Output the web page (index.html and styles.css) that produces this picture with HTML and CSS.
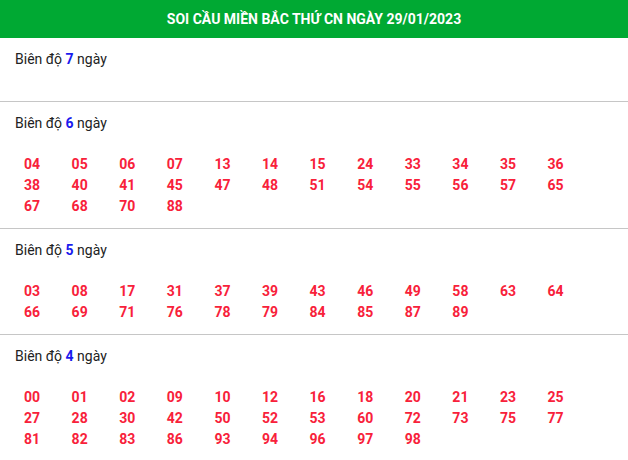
FILE: index.html
```html
<!DOCTYPE html>
<html lang="vi">
<head>
  <meta charset="UTF-8" />
  <meta name="viewport" content="width=device-width, initial-scale=1.0"/>
  <title>Soi cầu miền Bắc</title>
  <link rel="stylesheet" href="styles.css">
</head>
<body>
  <div class="box">
    <div class="header">
      <h2>SOI CẦU MIỀN BẮC THỨ CN NGÀY 29/01/2023</h2>
    </div>

    <div class="section">
      <p class="label">Biên độ <b>7</b> ngày</p>
      <div class="numbers"></div>
    </div>

    <div class="section">
      <p class="label">Biên độ <b>6</b> ngày</p>
      <div class="numbers">
        <span>04</span><span>05</span><span>06</span><span>07</span><span>13</span><span>14</span>
        <span>15</span><span>24</span><span>33</span><span>34</span><span>35</span><span>36</span>
        <span>38</span><span>40</span><span>41</span><span>45</span><span>47</span><span>48</span>
        <span>51</span><span>54</span><span>55</span><span>56</span><span>57</span><span>65</span>
        <span>67</span><span>68</span><span>70</span><span>88</span>
      </div>
    </div>

    <div class="section">
      <p class="label">Biên độ <b>5</b> ngày</p>
      <div class="numbers">
        <span>03</span><span>08</span><span>17</span><span>31</span><span>37</span><span>39</span>
        <span>43</span><span>46</span><span>49</span><span>58</span><span>63</span><span>64</span>
        <span>66</span><span>69</span><span>71</span><span>76</span><span>78</span><span>79</span>
        <span>84</span><span>85</span><span>87</span><span>89</span>
      </div>
    </div>

    <div class="section">
      <p class="label">Biên độ <b>4</b> ngày</p>
      <div class="numbers">
        <span>00</span><span>01</span><span>02</span><span>09</span><span>10</span><span>12</span>
        <span>16</span><span>18</span><span>20</span><span>21</span><span>23</span><span>25</span>
        <span>27</span><span>28</span><span>30</span><span>42</span><span>50</span><span>52</span>
        <span>53</span><span>60</span><span>72</span><span>73</span><span>75</span><span>77</span>
        <span>81</span><span>82</span><span>83</span><span>86</span><span>93</span><span>94</span>
        <span>96</span><span>97</span><span>98</span>
      </div>
    </div>
  </div>
</body>
</html>
```

FILE: styles.css
```css
:root {
  --green: #00a933;
  --red: #f8213a;
  --blue: #1a1aee;
  --text-dark: #222;
  --line: #c6c6c6;
}
* {
  margin: 0;
  padding: 0;
  box-sizing: border-box;
}
body {
  font-family: 'Roboto', 'Liberation Sans', sans-serif;
  background: #fff;
  color: var(--text-dark);
}
.box {
  width: 100%;
}
.header {
  background: var(--green);
  height: 38px;
  text-align: center;
}
.header h2 {
  color: #fff;
  font-size: 14px;
  font-weight: 700;
  line-height: 38px;
}
.section {
  border-bottom: 1px solid var(--line);
}
.label {
  padding: 11px 15px 0;
  font-size: 14px;
  line-height: 21px;
}
.label b {
  color: var(--blue);
  font-weight: 700;
}
.numbers {
  display: grid;
  grid-template-columns: repeat(12, 47.6px);
  padding: 20px 0 11px 24px;
  font-size: 14px;
  font-weight: 700;
  line-height: 21px;
  color: var(--red);
}
```
